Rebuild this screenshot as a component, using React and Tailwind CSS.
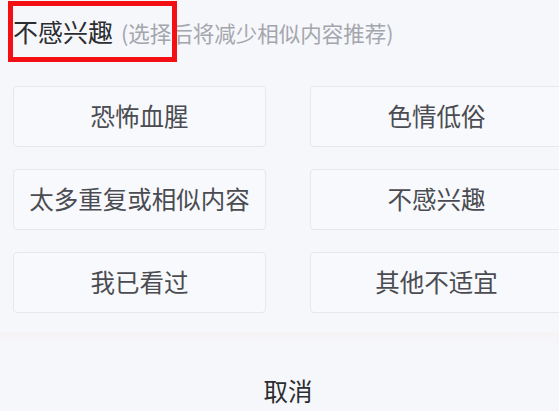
export default function App() {
  const items = [
    "恐怖血腥",
    "色情低俗",
    "太多重复或相似内容",
    "不感兴趣",
    "我已看过",
    "其他不适宜",
  ];
  return (
    <div className="relative w-[559px] h-[411px] overflow-hidden bg-[#f6f7fb] font-['Noto_Sans_CJK_SC','Noto_Sans',sans-serif]">
      <div className="w-[576px] flex flex-col">
        <div className="flex items-baseline pl-[13px] pt-[19px] whitespace-nowrap">
          <span className="text-[25px] leading-[24px] text-[#2b2d30]">不感兴趣</span>
          <span className="ml-[8px] text-[21.5px] leading-[24px] text-[#a4a6ad]">(选择后将减少相似内容推荐)</span>
        </div>
        <div className="mt-[41px] px-[13px] grid grid-cols-[253px_253px] gap-x-[44px] gap-y-[22px]">
          {items.map((t) => (
            <div
              key={t}
              className="h-[61px] rounded-[4px] border border-[#e7e8ed] bg-[#f8f9fc] flex items-center justify-center text-[24.5px] text-[#4a4c52] whitespace-nowrap"
            >
              {t}
            </div>
          ))}
        </div>
        <div className="mt-[19px] h-[12px] bg-gradient-to-b from-[#f7f3f5] to-[#f6f7fb]" />
        <div className="mt-[35px] text-center text-[24.5px] leading-[24px] text-[#2b2d30]">取消</div>
      </div>
      <div className="absolute left-[8px] top-[1px] w-[169px] h-[61px] border-[5px] border-[#f40f15]" />
    </div>
  );
}
